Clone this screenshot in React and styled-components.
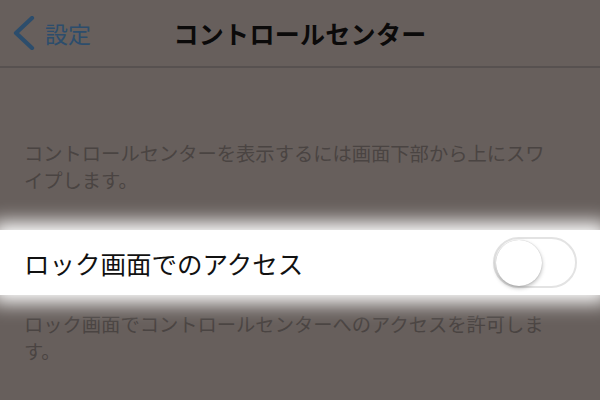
import React from "react";
import styled, { createGlobalStyle } from "styled-components";

const GlobalStyle = createGlobalStyle`
  html, body {
    margin: 0;
    padding: 0;
    background: #675f5c;
  }
  body {
    font-family: "Noto Sans CJK JP", "Noto Sans", sans-serif;
  }
`;

const Screen = styled.div`
  width: 600px;
  height: 400px;
  overflow: hidden;
  background: #675f5c;
  display: flex;
  flex-direction: column;
`;

const NavBar = styled.div`
  position: relative;
  height: 66px;
  border-bottom: 2px solid #575150;
  display: flex;
  align-items: center;
  justify-content: center;
`;

const BackButton = styled.div`
  position: absolute;
  left: 12px;
  top: 0;
  height: 66px;
  display: flex;
  align-items: center;
  gap: 9px;
  color: #2c4d6c;
  font-size: 23px;
`;

const Title = styled.div`
  font-size: 25px;
  font-weight: 700;
  color: #0b0a0a;
  letter-spacing: 0.3px;
`;

const Note = styled.p`
  margin: ${(p) => p.$top}px 0 0 24px;
  padding: 0;
  font-size: 19.3px;
  line-height: 27px;
  color: #4a4442;
  width: 535px;
  line-break: ${(p) => (p.$anywhere ? "anywhere" : "auto")};
`;

const Row = styled.div`
  margin-top: ${(p) => p.$top}px;
  height: 65px;
  background: #ffffff;
  box-shadow: 0 0 18px 8px #ffffff;
  display: flex;
  align-items: center;
  justify-content: space-between;
  padding: 0 23px 0 24px;
  position: relative;
  z-index: 1;
`;

const Label = styled.span`
  font-size: 25.5px;
  color: #111;
`;

const Track = styled.div`
  width: 78px;
  height: 47px;
  border-radius: 26px;
  border: 2px solid #e3e3e3;
  background: #fff;
  display: flex;
  align-items: center;
  padding: 0 1px;
`;

const Knob = styled.div`
  width: 46px;
  height: 46px;
  border-radius: 50%;
  background: #fff;
  box-shadow: 0 2px 4px rgba(0, 0, 0, 0.28), 0 0 1px rgba(0, 0, 0, 0.25);
`;

export default function App() {
  return (
    <Screen>
      <GlobalStyle />
      <NavBar>
        <BackButton>
          <svg width="24" height="34" viewBox="0 0 24 34">
            <polyline
              points="20,2 4,17 20,32"
              fill="none"
              stroke="#2c4d6c"
              strokeWidth="4.2"
              strokeLinecap="round"
              strokeLinejoin="round"
            />
          </svg>
          <span>設定</span>
        </BackButton>
        <Title>コントロールセンター</Title>
      </NavBar>
      <Note $top={72} $anywhere>
        コントロールセンターを表示するには画面下部から上にスワイプします。
      </Note>
      <Row $top={36}>
        <Label>ロック画面でのアクセス</Label>
        <Track>
          <Knob />
        </Track>
      </Row>
      <Note $top={16}>
        ロック画面でコントロールセンターへのアクセスを許可します。
      </Note>
    </Screen>
  );
}
